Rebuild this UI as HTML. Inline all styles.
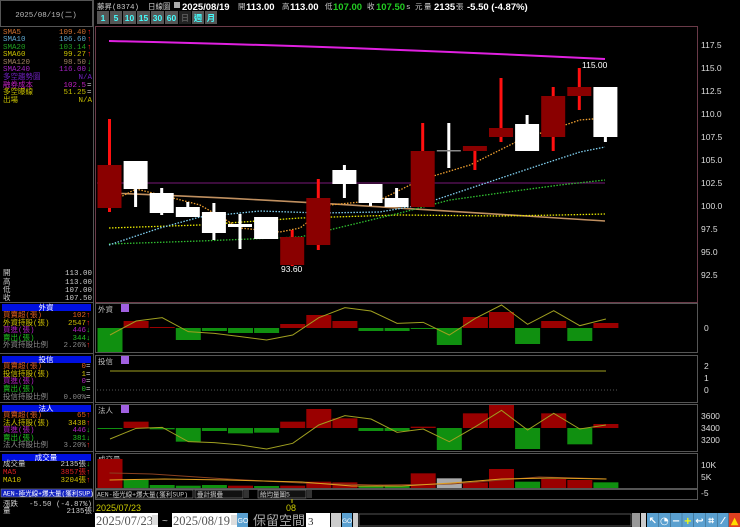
<!DOCTYPE html>
<html><head><meta charset="utf-8">
<style>
body{margin:0;background:#000;width:740px;height:527px;overflow:hidden;font-family:"Liberation Sans","Noto Sans CJK TC",sans-serif}
svg{display:block}
.s{font-family:"Liberation Mono","Noto Sans CJK TC",monospace;font-size:7.5px}
.b{font-family:"Liberation Sans","Noto Sans CJK TC",sans-serif;font-weight:bold;font-size:9.5px;fill:#fff}
.ax{font-family:"Liberation Sans",sans-serif;font-size:8.5px;fill:#ddd}
</style></head><body>
<svg id="g" width="740" height="527" xmlns="http://www.w3.org/2000/svg">
<rect width="740" height="527" fill="#000"/>
<rect x="0.5" y="0.5" width="92" height="26" fill="none" stroke="#555"/>
<text x="46" y="17" text-anchor="middle" class="s" fill="#bbb">2025/08/19(二)</text>
<line x1="93.5" y1="0" x2="93.5" y2="512" stroke="#555"/>
<g class="s" text-anchor="start">
<text x="3" y="34" fill="#d07030">SMA5</text><text x="86" y="34" text-anchor="end" fill="#d07030">109.40</text><text x="87" y="34" fill="#f22">↑</text>
<text x="3" y="41" fill="#60a8d0">SMA10</text><text x="86" y="41" text-anchor="end" fill="#60a8d0">106.60</text><text x="87" y="41" fill="#f22">↑</text>
<text x="3" y="49" fill="#20a020">SMA20</text><text x="86" y="49" text-anchor="end" fill="#20a020">103.14</text><text x="87" y="49" fill="#f22">↑</text>
<text x="3" y="56" fill="#c8c000">SMA60</text><text x="86" y="56" text-anchor="end" fill="#c8c000">99.27</text><text x="87" y="56" fill="#f22">↑</text>
<text x="3" y="64" fill="#a08060">SMA120</text><text x="86" y="64" text-anchor="end" fill="#a08060">98.50</text><text x="87" y="64" fill="#2c2">↓</text>
<text x="3" y="71" fill="#a020c0">SMA240</text><text x="86" y="71" text-anchor="end" fill="#a020c0">116.00</text><text x="87" y="71" fill="#2c2">↓</text>
<text x="3" y="79" fill="#7020c0">多空趨勢圖</text><text x="92" y="79" text-anchor="end" fill="#7020c0">N/A</text>
<text x="3" y="87" fill="#c020c0">融券成本</text><text x="86" y="87" text-anchor="end" fill="#c020c0">102.5</text><text x="87" y="87" fill="#ccc">=</text>
<text x="3" y="94" fill="#c8c000">多空曝線</text><text x="86" y="94" text-anchor="end" fill="#c8c000">51.25</text><text x="87" y="94" fill="#ccc">=</text>
<text x="3" y="102" fill="#c8c000">出場</text><text x="92" y="102" text-anchor="end" fill="#c8c000">N/A</text>
<text x="3" y="275" fill="#ccc">開</text><text x="92" y="275" text-anchor="end" fill="#ccc">113.00</text>
<text x="3" y="284" fill="#ccc">高</text><text x="92" y="284" text-anchor="end" fill="#ccc">113.00</text>
<text x="3" y="292" fill="#ccc">低</text><text x="92" y="292" text-anchor="end" fill="#ccc">107.00</text>
<text x="3" y="300" fill="#ccc">收</text><text x="92" y="300" text-anchor="end" fill="#ccc">107.50</text>
</g>
<line x1="0" y1="302.5" x2="93" y2="302.5" stroke="#555"/>
<rect x="2" y="304" width="89" height="7" fill="#0010e0"/><text x="46" y="310" text-anchor="middle" class="s" fill="#fff">外資</text>
<rect x="2" y="356" width="89" height="7" fill="#0010e0"/><text x="46" y="362" text-anchor="middle" class="s" fill="#fff">投信</text>
<rect x="2" y="405" width="89" height="7" fill="#0010e0"/><text x="46" y="411" text-anchor="middle" class="s" fill="#fff">法人</text>
<rect x="2" y="454" width="89" height="7" fill="#0010e0"/><text x="46" y="460" text-anchor="middle" class="s" fill="#fff">成交量</text>
<line x1="0" y1="353.5" x2="93" y2="353.5" stroke="#555"/>
<line x1="0" y1="402.5" x2="93" y2="402.5" stroke="#555"/>
<line x1="0" y1="451.5" x2="93" y2="451.5" stroke="#555"/>
<g class="s">
<text x="3" y="317" fill="#e06020">買賣超(張)</text><text x="86" y="317" text-anchor="end" fill="#e06020">102</text><text x="86" y="317" fill="#f22">↑</text>
<text x="3" y="325" fill="#d0c000">外資持股(張)</text><text x="86" y="325" text-anchor="end" fill="#d0c000">2547</text><text x="86" y="325" fill="#f22">↑</text>
<text x="3" y="332" fill="#b020c0">買進(張)</text><text x="86" y="332" text-anchor="end" fill="#b020c0">446</text><text x="86" y="332" fill="#2c2">↓</text>
<text x="3" y="340" fill="#20c020">賣出(張)</text><text x="86" y="340" text-anchor="end" fill="#20c020">344</text><text x="86" y="340" fill="#2c2">↓</text>
<text x="3" y="347" fill="#888">外資持股比例</text><text x="86" y="347" text-anchor="end" fill="#888">2.26%</text><text x="86" y="347" fill="#f22">↑</text>
<text x="3" y="368" fill="#e06020">買賣超(張)</text><text x="86" y="368" text-anchor="end" fill="#e06020">0</text><text x="86" y="368" fill="#ccc">=</text>
<text x="3" y="376" fill="#d0c000">投信持股(張)</text><text x="86" y="376" text-anchor="end" fill="#d0c000">1</text><text x="86" y="376" fill="#ccc">=</text>
<text x="3" y="383" fill="#b020c0">買進(張)</text><text x="86" y="383" text-anchor="end" fill="#b020c0">0</text><text x="86" y="383" fill="#ccc">=</text>
<text x="3" y="391" fill="#20c020">賣出(張)</text><text x="86" y="391" text-anchor="end" fill="#20c020">0</text><text x="86" y="391" fill="#ccc">=</text>
<text x="3" y="399" fill="#888">投信持股比例</text><text x="86" y="399" text-anchor="end" fill="#888">0.00%</text><text x="86" y="399" fill="#ccc">=</text>
<text x="3" y="417" fill="#e06020">買賣超(張)</text><text x="86" y="417" text-anchor="end" fill="#e06020">65</text><text x="86" y="417" fill="#f22">↑</text>
<text x="3" y="425" fill="#d0c000">法人持股(張)</text><text x="86" y="425" text-anchor="end" fill="#d0c000">3438</text><text x="86" y="425" fill="#f22">↑</text>
<text x="3" y="432" fill="#b020c0">買進(張)</text><text x="86" y="432" text-anchor="end" fill="#b020c0">446</text><text x="86" y="432" fill="#2c2">↓</text>
<text x="3" y="440" fill="#20c020">賣出(張)</text><text x="86" y="440" text-anchor="end" fill="#20c020">381</text><text x="86" y="440" fill="#2c2">↓</text>
<text x="3" y="447" fill="#888">法人持股比例</text><text x="86" y="447" text-anchor="end" fill="#888">3.20%</text><text x="86" y="447" fill="#f22">↑</text>
<text x="3" y="466" fill="#ccc">成交量</text><text x="86" y="466" text-anchor="end" fill="#ccc">2135張</text><text x="86" y="466" fill="#2c2">↓</text>
<text x="3" y="474" fill="#e02020">MA5</text><text x="86" y="474" text-anchor="end" fill="#e02020">3857張</text><text x="86" y="474" fill="#f22">↑</text>
<text x="3" y="482" fill="#d0c000">MA10</text><text x="86" y="482" text-anchor="end" fill="#d0c000">3204張</text><text x="86" y="482" fill="#f22">↑</text>
</g>
<rect x="1" y="489" width="91" height="8" fill="#1020c0" stroke="#888" stroke-width="0.6"/>
<text x="3" y="495.5" class="s" fill="#fff" style="font-size:6.5px">AEN-極光線+爆大量(獲利SUP)</text>
<text x="3" y="506" class="s" fill="#ccc">漲跌</text><text x="92" y="506" text-anchor="end" class="s" fill="#ccc">-5.50 (-4.87%)</text>
<text x="3" y="513" class="s" fill="#ccc">量</text><text x="92" y="513" text-anchor="end" class="s" fill="#ccc">2135張</text>
<!-- header -->
<text x="97" y="9" class="s" fill="#ccc">藤昇(8374)</text>
<text x="148" y="9" class="s" fill="#ccc">日線圖</text>
<rect x="174" y="2" width="6" height="6" fill="#aaa"/>
<text x="182" y="10" class="b">2025/08/19</text>
<text x="238" y="9" class="s" fill="#ccc">開</text><text x="246" y="10" class="b">113.00</text>
<text x="282" y="9" class="s" fill="#ccc">高</text><text x="290" y="10" class="b">113.00</text>
<text x="325" y="9" class="s" fill="#ccc">低</text><text x="333" y="10" class="b" style="fill:#2c2">107.00</text>
<text x="367" y="9" class="s" fill="#ccc">收</text><text x="376" y="10" class="b" style="fill:#2c2">107.50</text>
<text x="406" y="9" class="s" fill="#ccc">s 元</text>
<text x="424" y="9" class="s" fill="#ccc">量</text><text x="434" y="10" class="b">2135</text>
<text x="456" y="9" class="s" fill="#ccc">張</text><text x="467" y="10" class="b">-5.50 (-4.87%)</text>
<g id="btns"></g>
<rect x="95.5" y="26.5" width="602" height="276" fill="none" stroke="#6a3a48"/>
<g class="ax">
<text x="701" y="48">117.5</text><text x="701" y="71">115.0</text><text x="701" y="94">112.5</text><text x="701" y="117">110.0</text><text x="701" y="140">107.5</text><text x="701" y="163">105.0</text><text x="701" y="186">102.5</text><text x="701" y="209">100.0</text><text x="701" y="232">97.5</text><text x="701" y="255">95.0</text><text x="701" y="278">92.5</text>
</g>
<line x1="97" y1="183" x2="605" y2="183" stroke="#a020a0" stroke-width="0.8"/>
<path d="M109,41 C250,44 400,49 605,59" stroke="#e020e0" stroke-width="2" fill="none"/>
<path d="M109,193 C250,198 400,208 605,221" stroke="#c09060" stroke-width="1.6" fill="none"/>
<path d="M109,228 L200,225 L300,218 L400,215 L500,216 L560,215 L605,214" stroke="#e8e800" stroke-width="1.3" stroke-dasharray="1.5,1.5" fill="none"/>
<path d="M109,244 L200,241 L300,237 L350,225 L400,213 L450,200 L500,193 L560,185 L605,180" stroke="#30c030" stroke-width="1.3" stroke-dasharray="1.5,1.5" fill="none"/>
<path d="M109,245 L160,228 L200,217 L260,211 L320,213 L380,212 L420,205 L480,185 L540,165 L580,152 L605,147" stroke="#80d0f0" stroke-width="1.3" stroke-dasharray="1.5,1.5" fill="none"/>
<path d="M109,203 L136,189 L165,196 L200,205 L240,228 L280,232 L300,228 L330,205 L380,200 L420,180 L470,165 L520,140 L580,120 L605,118" stroke="#f0a030" stroke-width="1.3" stroke-dasharray="1.5,1.5" fill="none"/>
<g id="candles"></g>
<text x="582" y="68" class="ax" style="fill:#fff">115.00</text>
<text x="281" y="272" class="ax" style="fill:#fff">93.60</text>
<rect x="95.5" y="303.5" width="602" height="49" fill="none" stroke="#555"/>
<rect x="95.5" y="355.5" width="602" height="47" fill="none" stroke="#555"/>
<rect x="95.5" y="404.5" width="602" height="47" fill="none" stroke="#555"/>
<rect x="95.5" y="453.5" width="602" height="35" fill="none" stroke="#555"/>
<rect x="95.5" y="489.5" width="602" height="10" fill="none" stroke="#555"/>
<g class="s" fill="#bbb"><text x="98" y="312">外資</text><text x="98" y="364">投信</text><text x="98" y="413">法人</text><text x="98" y="462">成交量</text></g>
<rect x="121" y="304" width="8" height="8" fill="#a060e0"/><rect x="121" y="356" width="8" height="8" fill="#a060e0"/><rect x="121" y="405" width="8" height="8" fill="#a060e0"/>
<g class="ax"><text x="704" y="331">0</text><text x="704" y="369">2</text><text x="704" y="381">1</text><text x="704" y="393">0</text><text x="701" y="419">3600</text><text x="701" y="431">3400</text><text x="701" y="443">3200</text><text x="701" y="468">10K</text><text x="701" y="480">5K</text><text x="701" y="496">-5</text></g>
<line x1="110" y1="371" x2="606" y2="371" stroke="#a0a020" stroke-width="1"/>
<line x1="97" y1="390" x2="618" y2="390" stroke="#555" stroke-dasharray="1,2"/>
<g id="subs"></g>
<rect x="96" y="490" width="97" height="8" fill="#000" stroke="#888" stroke-width="0.6"/><text x="97" y="496.5" class="s" fill="#ccc" style="font-size:6.5px">AEN-極光線+爆大量(獲利SUP)</text>
<rect x="195" y="490" width="48" height="8" fill="#111" stroke="#888" stroke-width="0.6"/><text x="197" y="496.5" class="s" fill="#ccc" style="font-size:6.5px">疊計摺疊</text><rect x="244" y="490" width="5" height="8" fill="#333"/>
<rect x="258" y="490" width="48" height="8" fill="#111" stroke="#888" stroke-width="0.6"/><text x="260" y="496.5" class="s" fill="#ccc" style="font-size:6.5px">給均量圖5</text><rect x="307" y="490" width="5" height="8" fill="#333"/>
<line x1="292" y1="499" x2="292" y2="503" stroke="#cc0"/>
<text x="96" y="511" style="font-family:'Liberation Sans';font-size:9px" fill="#cc0">2025/07/23</text>
<text x="286" y="511" style="font-family:'Liberation Sans';font-size:9px" fill="#cc0">08</text>
<rect x="95" y="513" width="63" height="14" fill="#fff"/><text x="96" y="525" style="font-family:'Liberation Serif';font-size:12.5px" fill="#555">2025/07/23</text><rect x="152" y="515" width="6" height="10" fill="#ddd"/>
<text x="162" y="524" fill="#ccc" style="font-size:10px">~</text>
<rect x="172" y="513" width="66" height="14" fill="#fff"/><text x="173" y="525" style="font-family:'Liberation Serif';font-size:12.5px" fill="#555">2025/08/19</text><rect x="231" y="515" width="6" height="10" fill="#ddd"/>
<rect x="237" y="513" width="11" height="14" fill="#5aa0d0"/><text x="237.5" y="523" style="font-size:7px" fill="#fff">GO</text>
<text x="253" y="525" style="font-family:'Noto Sans CJK TC',sans-serif;font-size:13px" fill="#aaa">保留空間</text>
<rect x="306" y="513" width="24" height="14" fill="#fff"/><text x="308" y="525" style="font-family:'Liberation Serif';font-size:11px" fill="#333">3</text><rect x="331" y="513" width="10" height="14" fill="#ccc"/>
<rect x="342" y="513" width="10" height="14" fill="#5aa0d0"/><text x="342" y="523" style="font-size:6.5px" fill="#fff">GO</text>
<rect x="353" y="513" width="5" height="14" fill="#ccc"/>
<rect x="359" y="514" width="272" height="12" fill="#000" stroke="#555"/>
<rect x="632" y="513" width="8" height="14" fill="#999"/>
<rect x="641" y="513" width="5" height="14" fill="#ccc"/>
<g id="icons"></g>
</svg>
<script>
var ns="http://www.w3.org/2000/svg";
function el(p,t,a){var e=document.createElementNS(ns,t);for(var k in a)e.setAttribute(k,a[k]);document.getElementById(p).appendChild(e);return e;}
var bl=["1","5","10","15","30","60","日","週","月"];var bx=97;
bl.forEach(function(b,i){var w=i>=2&&i<=5?13:12;
 el("btns","rect",{x:bx,y:11,width:w,height:13,fill:i==6?"#222":"#555"});
 var t=el("btns","text",{x:bx+w/2,y:21,"text-anchor":"middle",fill:i==6?"#555":"#4ff","font-size":"8.5","font-family":"Liberation Sans, Noto Sans CJK TC, sans-serif","font-weight":"bold"});t.textContent=b;bx+=w+1;});
var C=[[165,208,119,212,1],[161,189,161,207,0],[193,213,188,215,0],[207,217,202,217,0],[212,233,203,240,0],[224,227,214,249,0],[217,239,217,239,0],[237,265,230,266,1],[198,245,179,250,1],[170,184,165,198,0],[184,203,184,206,0],[198,207,188,207,0],[151,207,123,207,1],[150,152,123,168,0],[146,151,146,170,1],[128,137,78,142,1],[124,151,115,151,0],[96,137,87,151,1],[87,96,68,110,1],[87,137,87,142,0]];
C.forEach(function(c,i){var cx=109.5+i*26.1;
 el("candles","rect",{x:cx-1.5,y:c[2],width:3,height:c[3]-c[2],fill:c[4]?"#ff1010":"#fff"});
 if(i==13){el("candles","rect",{x:cx-12,y:c[0],width:24,height:1.5,fill:"#888"});return;}
 el("candles","rect",{x:cx-12,y:c[0],width:24,height:Math.max(2,c[1]-c[0]),fill:c[4]?"#8a0000":"#fff"});});
function bx0(i){return 97.5+i*26.1;}
function bars(zero,vals,line){vals.forEach(function(v,i){var x=bx0(i);var top=Math.min(v,zero),h=Math.abs(v-zero);
 el("subs","rect",{x:x,y:top,width:25,height:Math.max(h,1),fill:v<zero?"#9a0000":"#109010"});});
 var d=line.map(function(y,i){return (i?"L":"M")+(bx0(i)+12.5)+","+y}).join("");
 el("subs","path",{d:d,stroke:"#a0a020","stroke-width":1,fill:"none"});}
var F=[352,321,327,340,331,333,333,324,315,321,331,331,329,345,317,312,344,321,341,323];
var FL=[120,78,68,110,115,125,135,120,68,38,48,85,82,120,70,30,88,47,92,72].map(function(v){return 295+v/3});
bars(328,F,FL);
var L=[400,380,403,440,408,415,413,380,342,370,408,408,395,465,355,330,462,355,448,387].map(function(v){return 295+v/3});
var LL=[432,400,397,440,443,450,462,445,390,362,372,412,402,440,395,346,405,355,402,390].map(function(v){return 295+v/3});
bars(428,L,LL);
var V=[492,555,570,572,570,572,573,572,560,562,572,572,535,550,562,522,560,552,555,562];
V.forEach(function(v,i){var x=bx0(i);var y=295+v/3;var col=[1,0,0,0,0,1,0,1,1,1,0,0,1,2,1,1,0,1,1,0][i];
 el("subs","rect",{x:x,y:y,width:25,height:488-y,fill:col==1?"#9a0000":col==2?"#aaa":"#109010"});});
function mx(x){return 109.5+(x-106)/20.9*26.1;}
function pth(pts){return pts.map(function(p,i){return (i?"L":"M")+mx(p[0])+","+p[1]}).join("");}
el("subs","path",{d:pth([[106,473],[140,474],[200,479],[260,483],[320,485],[380,484],[420,480],[450,477],[480,478],[504,479]]),stroke:"#8a4020","stroke-width":1,fill:"none"});
el("subs","path",{d:pth([[106,480],[150,479],[200,480],[260,482],[300,486],[340,486],[380,483],[420,479],[460,478],[504,479]]),stroke:"#e0a020","stroke-width":1,fill:"none"});
var gl=["↖","◔","−","+","↩","⌗","⁄","▲"];
gl.forEach(function(g,i){var x=647+i*11.7;el("icons","rect",{x:x,y:513,width:11.5,height:14,fill:i==7?"#e04020":"#5aa0d0"});
 var t=el("icons","text",{x:x+5.7,y:524,"text-anchor":"middle",fill:i==3?"#ff0":i==7?"#fd0":"#fff","font-size":"10","font-family":"DejaVu Sans, sans-serif","font-weight":"bold"});t.textContent=g;});
</script>
</body></html>
